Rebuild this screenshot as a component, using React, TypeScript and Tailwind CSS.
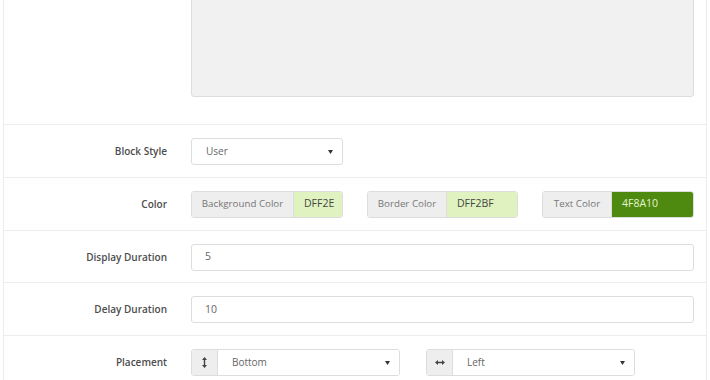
import React from 'react'

const font = { fontFamily: '"Open Sans", "Noto Sans", Arial, sans-serif' }

function Caret() {
  return (
    <svg width="5" height="4" viewBox="0 0 5 4" className="shrink-0">
      <path d="M0 0 H5 L2.5 4 Z" fill="#333" />
    </svg>
  )
}

function Row({ label, children }: { label: string; children: React.ReactNode }) {
  return (
    <div className="flex items-center border-t border-[#ececec] pt-[13px] pb-[11.75px]">
      <div className="w-[163px] shrink-0 text-right text-[10px] font-semibold text-[#4d4d4d]">{label}</div>
      <div className="ml-[24px] flex h-[27px] w-[503px] items-center">{children}</div>
    </div>
  )
}

function ColorGroup({ name, value, addonW, valueW, dark }: { name: string; value: string; addonW: string; valueW: string; dark?: boolean }) {
  return (
    <div className="flex h-[27px] overflow-hidden rounded-[3px] border border-[#ddd]">
      <div className={`${addonW} flex items-center justify-center bg-[#eeeeee] text-[9.75px] text-[#777]`}>{name}</div>
      <div
        className={`${valueW} flex items-center pl-[10px] border-l border-[#ddd] text-[10.5px] ${dark ? 'bg-[#4f8a10] text-[#e4f5cc]' : 'bg-[#dff2bf] text-[#444]'}`}
      >
        {value}
      </div>
    </div>
  )
}

function AddonSelect({ icon, value }: { icon: React.ReactNode; value: string }) {
  return (
    <div className="flex h-[27px] w-[209px] overflow-hidden rounded-[3px] border border-[#ddd] text-[10px]">
      <div className="flex w-[26px] items-center justify-center border-r border-[#ddd] bg-[#eeeeee]">{icon}</div>
      <div className="flex flex-1 items-center justify-between bg-white pl-[14px] pr-[9px] text-[#666]">
        <span>{value}</span>
        <Caret />
      </div>
    </div>
  )
}

export default function App() {
  return (
    <div className="h-[380px] w-[710px] overflow-hidden bg-white" style={font}>
      <div className="ml-[3px] h-[400px] w-[704px] border-x border-[#ececec]">
        {/* textarea (cut off at top) */}
        <div className="-mt-[14px] flex pb-[27px]">
          <div className="ml-[187px] h-[111px] w-[503px] rounded-[3px] border border-[#ddd] bg-[#f1f1f1]" />
        </div>

        <Row label="Block Style">
          <div className="flex h-[27px] w-[152px] items-center justify-between rounded-[3px] border border-[#ddd] bg-white pl-[14px] pr-[9px] text-[10px] text-[#666]">
            <span>User</span>
            <Caret />
          </div>
        </Row>

        <Row label="Color">
          <div className="flex w-full items-center justify-between">
            <ColorGroup name="Background Color" value="DFF2E" addonW="w-[101px]" valueW="w-[49px]" />
            <ColorGroup name="Border Color" value="DFF2BF" addonW="w-[78px]" valueW="w-[71px]" />
            <ColorGroup name="Text Color" value="4F8A10" addonW="w-[68px]" valueW="w-[82px]" dark />
          </div>
        </Row>

        <Row label="Display Duration">
          <div className="flex h-[27px] w-full items-center rounded-[3px] border border-[#ddd] bg-white pl-[13px] text-[10.5px] text-[#666]">5</div>
        </Row>

        <Row label="Delay Duration">
          <div className="flex h-[27px] w-full items-center rounded-[3px] border border-[#ddd] bg-white pl-[13px] text-[10.5px] text-[#666]">10</div>
        </Row>

        <Row label="Placement">
          <div className="flex items-center gap-[26px]">
            <AddonSelect
              value="Bottom"
              icon={
                <svg width="5" height="11" viewBox="0 0 5 11">
                  <path d="M2.5 0 L5 3 H3.2 V8 H5 L2.5 11 L0 8 H1.8 V3 H0 Z" fill="#444" />
                </svg>
              }
            />
            <AddonSelect
              value="Left"
              icon={
                <svg width="10" height="5" viewBox="0 0 10 5">
                  <path d="M0 2.5 L3 0 V1.8 H7 V0 L10 2.5 L7 5 V3.2 H3 V5 Z" fill="#444" />
                </svg>
              }
            />
          </div>
        </Row>
      </div>
    </div>
  )
}
